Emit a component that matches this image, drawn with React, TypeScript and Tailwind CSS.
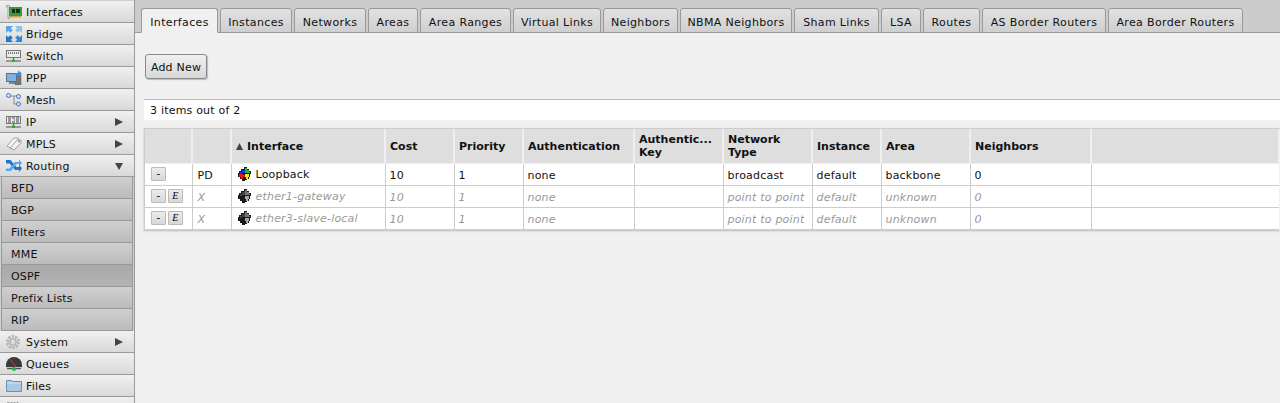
import React from 'react';

const ifaceIcon = (
  <svg width="16" height="14" viewBox="0 0 16 14">
    <path d="M0.5 0.5h3v13h-1.5V2h-1.5z" fill="#e6e6e6" stroke="#888" strokeWidth="0.7" />
    <rect x="3" y="2" width="13" height="9" fill="#3a9a3a" />
    <rect x="6" y="4" width="3" height="4" fill="#1c2a1c" />
    <rect x="10" y="4" width="4" height="4" fill="#1c2a1c" />
    <path d="M4 11h11v1.5H4z" fill="#c9a93a" />
  </svg>
);

const bridgeIcon = (
  <svg width="16" height="16" viewBox="0 0 16 16">
    <path d="M0 0h7l-2.2 2.2 2 2-2.6 2.6-2-2L0 7z" fill="#5aa5e6" />
    <path d="M16 0v7l-2.2-2.2-2 2-2.6-2.6 2-2L9 0z" fill="#8cc4ee" />
    <path d="M0 16V9l2.2 2.2 2-2 2.6 2.6-2 2L7 16z" fill="#1f78c8" />
    <path d="M16 16H9l2.2-2.2-2-2 2.6-2.6 2 2L16 9z" fill="#2d8ad8" />
  </svg>
);

const switchBox = (label?: string) => (
  <svg width="15" height="14" viewBox="0 0 15 14">
    <rect x="0.5" y="1.5" width="14" height="7" fill="#ececec" stroke="#777" />
    {label ? (
      <path d="M2 3h3M2 5h3M2 7h3M6 3h3M8 5h1M6 7h3M10 3h3M10 5h3M10 7h3" stroke="#444" strokeWidth="1" />
    ) : (
      <path d="M2 4h11" stroke="#555" strokeWidth="1.5" strokeDasharray="1 1" />
    )}
    <path d="M7.5 9v2" stroke="#555" />
    <path d="M0 12h15" stroke="#555" />
    <circle cx="7.5" cy="11.5" r="1.5" fill="#2da52d" />
  </svg>
);

const pppIcon = (
  <svg width="16" height="15" viewBox="0 0 16 15">
    <rect x="9" y="5" width="6" height="10" fill="#777" stroke="#555" strokeWidth="0.5" />
    <rect x="0.5" y="3.5" width="10" height="8" fill="#7fb2e2" stroke="#5b7186" />
    <path d="M3 13h6" stroke="#789" strokeWidth="2" />
    <path d="M9 3h3V0.5l4 3-4 3V5H9z" fill="#3b8ee0" />
  </svg>
);

const meshIcon = (
  <svg width="16" height="14" viewBox="0 0 16 14">
    <path d="M3 3h9M8 3v8h4" stroke="#888" fill="none" />
    <circle cx="2.5" cy="2.5" r="2" fill="#cfe0f5" stroke="#3b76c4" />
    <circle cx="12.5" cy="3.5" r="2" fill="#cfe0f5" stroke="#3b76c4" />
    <circle cx="12.5" cy="11" r="2" fill="#cfe0f5" stroke="#3b76c4" />
  </svg>
);

const mplsIcon = (
  <svg width="16" height="14" viewBox="0 0 16 14">
    <path d="M1 9l7-8h4l1 3-7 8z" fill="#f6f6f6" stroke="#a0a0a0" />
    <path d="M4 11l7-8h4v3l-7 7z" fill="#f0f0f0" stroke="#a0a0a0" />
    <circle cx="13" cy="4.5" r="1" fill="#888" />
  </svg>
);

const routingIcon = (
  <svg width="16" height="14" viewBox="0 0 16 14">
    <path d="M0 1h4.5l6 7H13V5.5l3 3.8-3 3.7V11H9L3.5 4.5H0z" fill="#1f78cc" />
    <path d="M0 9.5h3.5L9 3h4V0.5L16 4l-3 3.5V5h-2.5L5 12H0z" fill="#5aa8ea" />
  </svg>
);

const systemIcon = (
  <svg width="14" height="14" viewBox="0 0 14 14">
    <circle cx="7" cy="7" r="5.5" fill="none" stroke="#b4b4b4" strokeWidth="3" strokeDasharray="2.2 1.2" />
    <circle cx="7" cy="7" r="3.2" fill="#e2e2e2" stroke="#a0a0a0" />
    <circle cx="7" cy="7" r="1.2" fill="#f8f8f8" stroke="#b0b0b0" strokeWidth="0.5" />
  </svg>
);

const queuesIcon = (
  <svg width="16" height="16" viewBox="0 0 16 16">
    <path d="M0 9a8 8 0 0 1 16 0v2H0z" fill="#3a3a3a" />
    <path d="M4 3l6 8" stroke="#e03030" strokeWidth="1" />
    <path d="M1 12.5h14" stroke="#555" strokeWidth="1.5" />
    <circle cx="8" cy="13" r="2" fill="#27b34a" />
  </svg>
);

const filesIcon = (
  <svg width="16" height="13" viewBox="0 0 16 13">
    <path d="M0.5 1.5h5l1 1h9v10h-15z" fill="#a9c8e6" stroke="#6d8fb0" />
    <path d="M1 4h14" stroke="#d4e4f3" />
  </svg>
);

const logIcon = (
  <svg width="14" height="14" viewBox="0 0 14 14">
    <rect x="1.5" y="1.5" width="11" height="12" fill="#fafafa" stroke="#999" strokeDasharray="2 1" />
  </svg>
);

// four interlocked pieces, grey when the interface is disabled
const puzzleIcon = (on: boolean) => (
  <svg width="13" height="14" viewBox="0 0 13 14">
    <path d="M6 0h3v2h2v2h2v3h-1v3h-1v2H9v1H7v1H4v-2H2v-2H0V6h1V4h2V2h3z" fill="#1a1a1a" />
    {on ? (
      <>
        <path d="M2 5h2V3h3v3H4v1H2z" fill="#1c2fd0" />
        <path d="M7 1h2v2h2v2h1v1H7z" fill="#1fb52f" />
        <path d="M1 7h4v1h2v2H5v2H3v-2H1z" fill="#e01818" />
        <path d="M7 7h4v3h-1v2H8v-2H7z" fill="#f4e81c" />
      </>
    ) : (
      <>
        <path d="M7 1h2v2h2v2h1v1H7z" fill="#777" />
        <path d="M7 7h4v3h-1v2H8v-2H7z" fill="#a8a8a8" />
        <path d="M2 5h2V3h3v3H4v1H2z" fill="#444" />
      </>
    )}
  </svg>
);

const right = (
  <svg width="8" height="8" viewBox="0 0 8 8" className="mr-[2px]">
    <path d="M0 0l8 4-8 4z" fill="#444" />
  </svg>
);

const down = (
  <svg width="8" height="8" viewBox="0 0 8 8" className="mr-[2px]">
    <path d="M0 1h8l-4 7z" fill="#444" />
  </svg>
);

function MenuItem({ icon, label, arrow }: { icon: React.ReactNode; label?: string; arrow?: React.ReactNode }) {
  return (
    <div className="h-[22px] shrink-0 flex items-center pl-[6px] pr-[9px] border-b border-[#999] bg-gradient-to-b from-[#f0f0f0] to-[#d9d9d9] text-[#111]">
      <span className="w-[20px] flex items-center">{icon}</span>
      <span className="flex-1 pt-[2px]">{label}</span>
      {arrow}
    </div>
  );
}

function SubItem({ label, active }: { label: string; active?: boolean }) {
  return (
    <div className={`h-[22px] shrink-0 flex items-center pl-[9px] pt-[2px] mx-[1px] border-x border-b border-[#999] text-[#111] ${active ? 'bg-gradient-to-b from-[#a8a8a8] to-[#b4b4b4]' : 'bg-gradient-to-b from-[#cfcfcf] to-[#bcbcbc]'}`}>
      {label}
    </div>
  );
}

const tabs = [
  { t: 'Interfaces', w: 'w-[77px]' },
  { t: 'Instances', w: 'w-[72px]' },
  { t: 'Networks', w: 'w-[72px]' },
  { t: 'Areas', w: 'w-[50px]' },
  { t: 'Area Ranges', w: 'w-[91px]' },
  { t: 'Virtual Links', w: 'w-[88px]' },
  { t: 'Neighbors', w: 'w-[75px]' },
  { t: 'NBMA Neighbors', w: 'w-[112px]' },
  { t: 'Sham Links', w: 'w-[85px]' },
  { t: 'LSA', w: 'w-[40px]' },
  { t: 'Routes', w: 'w-[57px]' },
  { t: 'AS Border Routers', w: 'w-[124px]' },
  { t: 'Area Border Routers', w: 'w-[135px]' },
];

const columns = [
  { w: 'w-[47px]' }, { w: 'w-[39px]' }, { w: 'w-[154px]', t: 'Interface', sort: true },
  { w: 'w-[69px]', t: 'Cost' }, { w: 'w-[69px]', t: 'Priority' }, { w: 'w-[111px]', t: 'Authentication' },
  { w: 'w-[89px]', t: 'Authentic...', t2: 'Key' }, { w: 'w-[89px]', t: 'Network', t2: 'Type' },
  { w: 'w-[69px]', t: 'Instance' }, { w: 'w-[89px]', t: 'Area' }, { w: 'w-[121px]', t: 'Neighbors' }, { w: '' },
];

const rows = [
  { dis: false, flag: 'PD', name: 'Loopback', cost: '10', pri: '1', auth: 'none', net: 'broadcast', inst: 'default', area: 'backbone', nb: '0' },
  { dis: true, flag: 'X', name: 'ether1-gateway', cost: '10', pri: '1', auth: 'none', net: 'point to point', inst: 'default', area: 'unknown', nb: '0' },
  { dis: true, flag: 'X', name: 'ether3-slave-local', cost: '10', pri: '1', auth: 'none', net: 'point to point', inst: 'default', area: 'unknown', nb: '0' },
];

function SmallBtn({ children }: { children: React.ReactNode }) {
  return (
    <span className="w-[15px] h-[14px] flex items-center justify-center border border-[#bbb] bg-gradient-to-b from-[#ececec] to-[#d8d8d8] text-[10px] leading-none text-black rounded-[1px]">
      {children}
    </span>
  );
}

export default function App() {
  const td = 'border-r border-b border-[#ccc] px-[4px] pt-[2px]';
  return (
    <div className="h-[403px] w-[1280px] overflow-hidden flex bg-[#f0f0f0] text-[11px] leading-[13px] tracking-[0.2px]" style={{ fontFamily: '"DejaVu Sans", Verdana, sans-serif' }}>
      {/* Menu */}
      <aside className="w-[135px] shrink-0 h-full flex flex-col overflow-hidden pt-[1px] border-r border-[#999] bg-[#d0d0d0]">
        <MenuItem icon={ifaceIcon} label="Interfaces" />
        <MenuItem icon={bridgeIcon} label="Bridge" />
        <MenuItem icon={switchBox()} label="Switch" />
        <MenuItem icon={pppIcon} label="PPP" />
        <MenuItem icon={meshIcon} label="Mesh" />
        <MenuItem icon={switchBox('255')} label="IP" arrow={right} />
        <MenuItem icon={mplsIcon} label="MPLS" arrow={right} />
        <MenuItem icon={routingIcon} label="Routing" arrow={down} />
        <SubItem label="BFD" />
        <SubItem label="BGP" />
        <SubItem label="Filters" />
        <SubItem label="MME" />
        <SubItem label="OSPF" active />
        <SubItem label="Prefix Lists" />
        <SubItem label="RIP" />
        <MenuItem icon={systemIcon} label="System" arrow={right} />
        <MenuItem icon={queuesIcon} label="Queues" />
        <MenuItem icon={filesIcon} label="Files" />
        <MenuItem icon={logIcon} />
      </aside>

      {/* Main */}
      <main className="flex-1 min-w-0 flex flex-col">
        <div className="h-[33px] shrink-0 bg-[#cccccc] border-b border-[#999] flex items-end pl-[6px] gap-[2px]">
          {tabs.map((tab, i) => (
            <div
              key={tab.t}
              className={`${tab.w} h-[25px] -mb-[1px] pt-[3px] flex items-center justify-center whitespace-nowrap tracking-[0.35px] rounded-t-[3px] border border-[#999] text-[#111] ${i === 0 ? 'bg-[#f0f0f0] border-b-[#f0f0f0]' : 'bg-gradient-to-b from-[#e2e2e2] to-[#cfcfcf]'}`}
            >
              {tab.t}
            </div>
          ))}
        </div>

        <div className="pl-[10px] pt-[21px]">
          <button className="h-[25px] w-[62px] pt-[1px] rounded-[3px] border border-[#888] shadow-[1px_1px_1px_#bbb] bg-gradient-to-b from-[#f0f0f0] to-[#d8d8d8] text-[#111] text-[11px]">
            Add New
          </button>
        </div>

        <div className="ml-[9px] mt-[20px] h-[21px] shrink-0 flex items-center px-[6px] border-t border-[#bbb] bg-white text-[#111]">
          3 items out of 2
        </div>

        <div className="ml-[9px] mt-[8px] border-t border-l border-[#ccc] shadow-[0_1px_2px_#bbb]">
          <table className="w-full table-fixed border-collapse">
            <colgroup>
              {columns.map((c, i) => <col key={i} className={c.w} />)}
            </colgroup>
            <thead>
              <tr className="h-[34px] bg-[#dedede]">
                {columns.map((c, i) => (
                  <th key={i} className="border-r-2 border-b border-[#efefef] px-[4px] pt-[1px] text-left font-bold text-[#111] tracking-normal align-middle">
                    {c.sort && (
                      <svg width="7" height="7" viewBox="0 0 7 7" className="inline-block mr-[4px]">
                        <path d="M3.5 0L7 7H0z" fill="#444" />
                      </svg>
                    )}
                    {c.t}
                    {c.t2 && <br />}
                    {c.t2}
                  </th>
                ))}
              </tr>
            </thead>
            <tbody>
              {rows.map((r) => {
                const cell = r.dis ? `${td} italic text-[#999]` : `${td} text-[#111]`;
                return (
                  <tr key={r.name} className="h-[22px] bg-white">
                    <td className="border-r border-b border-[#ccc] px-[4px]">
                      <div className="flex gap-[2px] pl-[2px]">
                        <SmallBtn>-</SmallBtn>
                        {r.dis && <SmallBtn><span className="italic" style={{ fontFamily: '"Liberation Serif", serif' }}>E</span></SmallBtn>}
                      </div>
                    </td>
                    <td className={`${cell} pl-[5px]`}>{r.flag}</td>
                    <td className="border-r border-b border-[#ccc] px-[4px]">
                      <div className={`flex items-center gap-[5px] pl-[2px] ${r.dis ? 'italic text-[#999]' : 'text-[#111]'}`}>
                        {puzzleIcon(!r.dis)}
                        <span className="whitespace-nowrap pt-[1px]">{r.name}</span>
                      </div>
                    </td>
                    <td className={cell}>{r.cost}</td>
                    <td className={cell}>{r.pri}</td>
                    <td className={cell}>{r.auth}</td>
                    <td className={cell}></td>
                    <td className={cell}>{r.net}</td>
                    <td className={cell}>{r.inst}</td>
                    <td className={cell}>{r.area}</td>
                    <td className={cell}>{r.nb}</td>
                    <td className="border-b border-[#ccc]"></td>
                  </tr>
                );
              })}
            </tbody>
          </table>
        </div>
      </main>
    </div>
  );
}
